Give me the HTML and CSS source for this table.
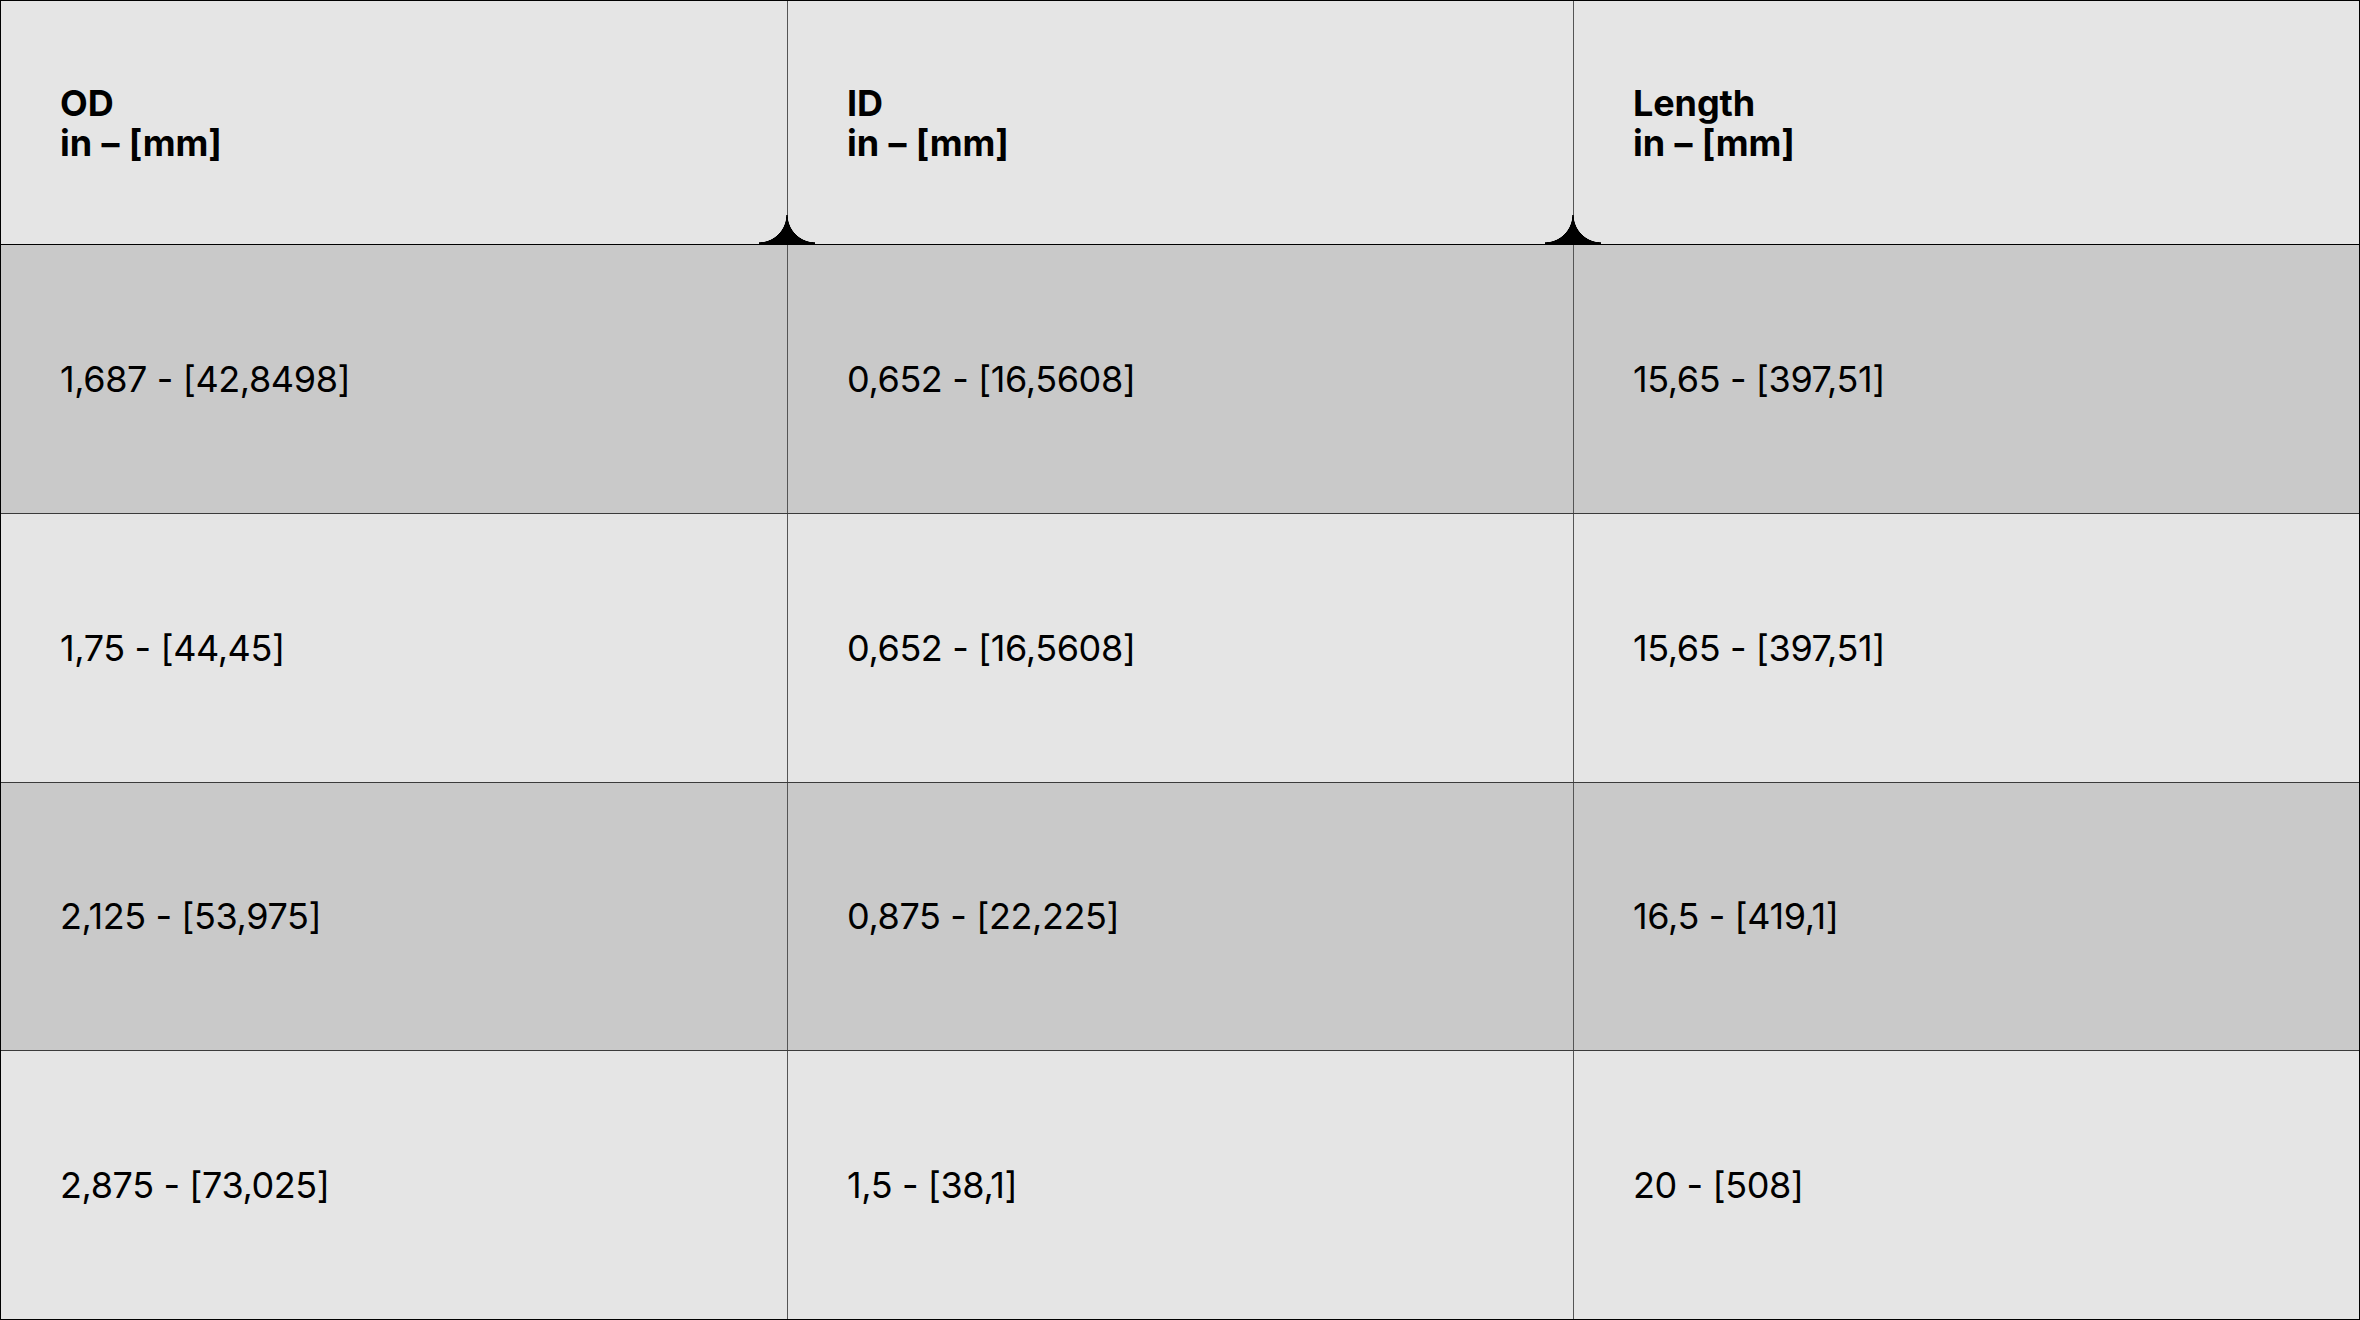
FILE: index.html
```html
<!DOCTYPE html>
<html lang="en">
<head>
<meta charset="utf-8">
<title>Dimensions</title>
<link rel="stylesheet" href="styles.css">
</head>
<body>
<div class="table">
  <div class="row head">
    <div class="cell"><span>OD<br>in – [mm]</span></div>
    <div class="cell notch"><span>ID<br>in – [mm]</span></div>
    <div class="cell notch"><span>Length<br>in – [mm]</span></div>
  </div>
  <div class="row dark">
    <div class="cell">1,687 - [42,8498]</div>
    <div class="cell">0,652 - [16,5608]</div>
    <div class="cell">15,65 - [397,51]</div>
  </div>
  <div class="row light">
    <div class="cell">1,75 - [44,45]</div>
    <div class="cell">0,652 - [16,5608]</div>
    <div class="cell">15,65 - [397,51]</div>
  </div>
  <div class="row dark">
    <div class="cell">2,125 - [53,975]</div>
    <div class="cell">0,875 - [22,225]</div>
    <div class="cell">16,5 - [419,1]</div>
  </div>
  <div class="row light">
    <div class="cell">2,875 - [73,025]</div>
    <div class="cell">1,5 - [38,1]</div>
    <div class="cell">20 - [508]</div>
  </div>
</div>
</body>
</html>
```

FILE: styles.css
```css
* { box-sizing: border-box; }
html, body { margin: 0; padding: 0; }
body {
  width: 2360px;
  height: 1320px;
  background: #e5e5e5;
  font-family: Inter, "Liberation Sans", sans-serif;
  color: #000;
}
.table {
  width: 2360px;
  height: 1320px;
  border: 1px solid #000;
  display: flex;
  flex-direction: column;
}
.row {
  display: grid;
  grid-template-columns: 1fr 1fr 1fr;
  flex: 1 1 0;
  border-top: 1px solid #3a3a3a;
}
.row.head {
  flex: 0 0 244px;
  border-top: none;
  border-bottom: 1px solid #000;
  background: #e5e5e5;
}
.row.head .cell {
  font-weight: 700;
  line-height: 40px;
  letter-spacing: -0.1px;
  word-spacing: 1px;
}
.row.head + .row { border-top: none; }
.row.dark { background: #c9c9c9; }
.row.light { background: #e5e5e5; }
.cell {
  position: relative;
  display: flex;
  align-items: center;
  padding-left: 59px;
  font-size: 36px;
  letter-spacing: -0.4px;
}
.cell + .cell { border-left: 1px solid #555; }
.notch::before {
  content: "";
  position: absolute;
  left: -29px;
  bottom: -1px;
  width: 56px;
  height: 30px;
  background:
    radial-gradient(circle at 0 0, transparent 27px, #000 27.6px) left top / 28px 30px no-repeat,
    radial-gradient(circle at 100% 0, transparent 27px, #000 27.6px) right top / 28px 30px no-repeat;
}
```
